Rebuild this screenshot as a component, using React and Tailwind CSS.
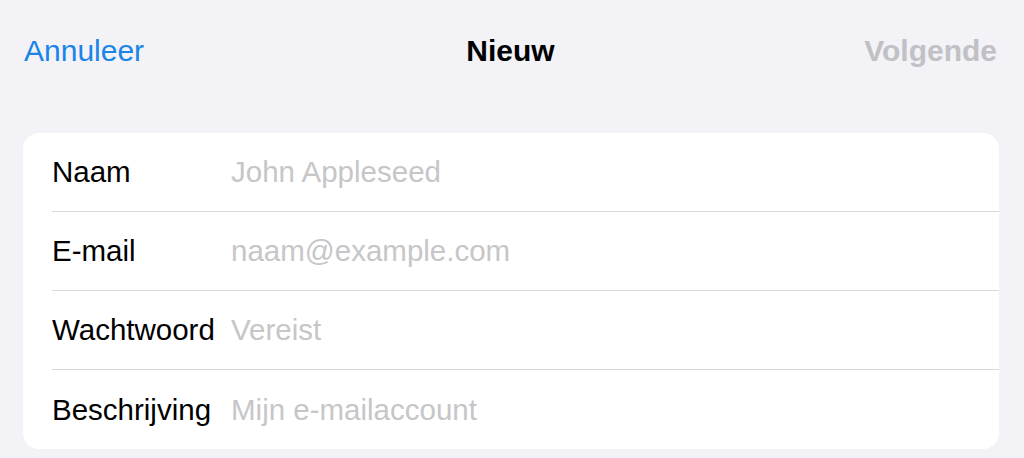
import React from "react";

const fields = [
  { label: "Naam", placeholder: "John Appleseed" },
  { label: "E-mail", placeholder: "naam@example.com" },
  { label: "Wachtwoord", placeholder: "Vereist" },
  { label: "Beschrijving", placeholder: "Mijn e-mailaccount" },
];

const App = () => {
  return (
    <div className="min-h-[458px] w-full bg-[#f2f2f7] pl-[23px] pr-[25px] font-['Liberation_Sans',Arial,sans-serif]">
      {/* Navigation bar */}
      <div className="grid h-[100px] grid-cols-3 items-center pl-[1px] pr-[2px] text-[30px]">
        <span className="text-[#1a84e8]">Annuleer</span>
        <span className="text-center font-bold text-black">Nieuw</span>
        <span className="text-right font-bold text-[#c1c1c5]">Volgende</span>
      </div>

      {/* Account form */}
      <div className="mt-[33px] overflow-hidden rounded-[16px] bg-white">
        {fields.map((field, i) => (
          <div
            key={field.label}
            className={`ml-[29px] flex h-[79px] items-center pt-[1px] text-[29.5px] ${
              i < fields.length - 1 ? "border-b border-[#d9d9dc]" : ""
            }`}
          >
            <span className="w-[179px] shrink-0 text-black">{field.label}</span>
            <input
              type="text"
              placeholder={field.placeholder}
              className="min-w-0 flex-1 bg-transparent text-black outline-none placeholder:text-[#c6c6c9]"
            />
          </div>
        ))}
      </div>
    </div>
  );
};

export default App;
